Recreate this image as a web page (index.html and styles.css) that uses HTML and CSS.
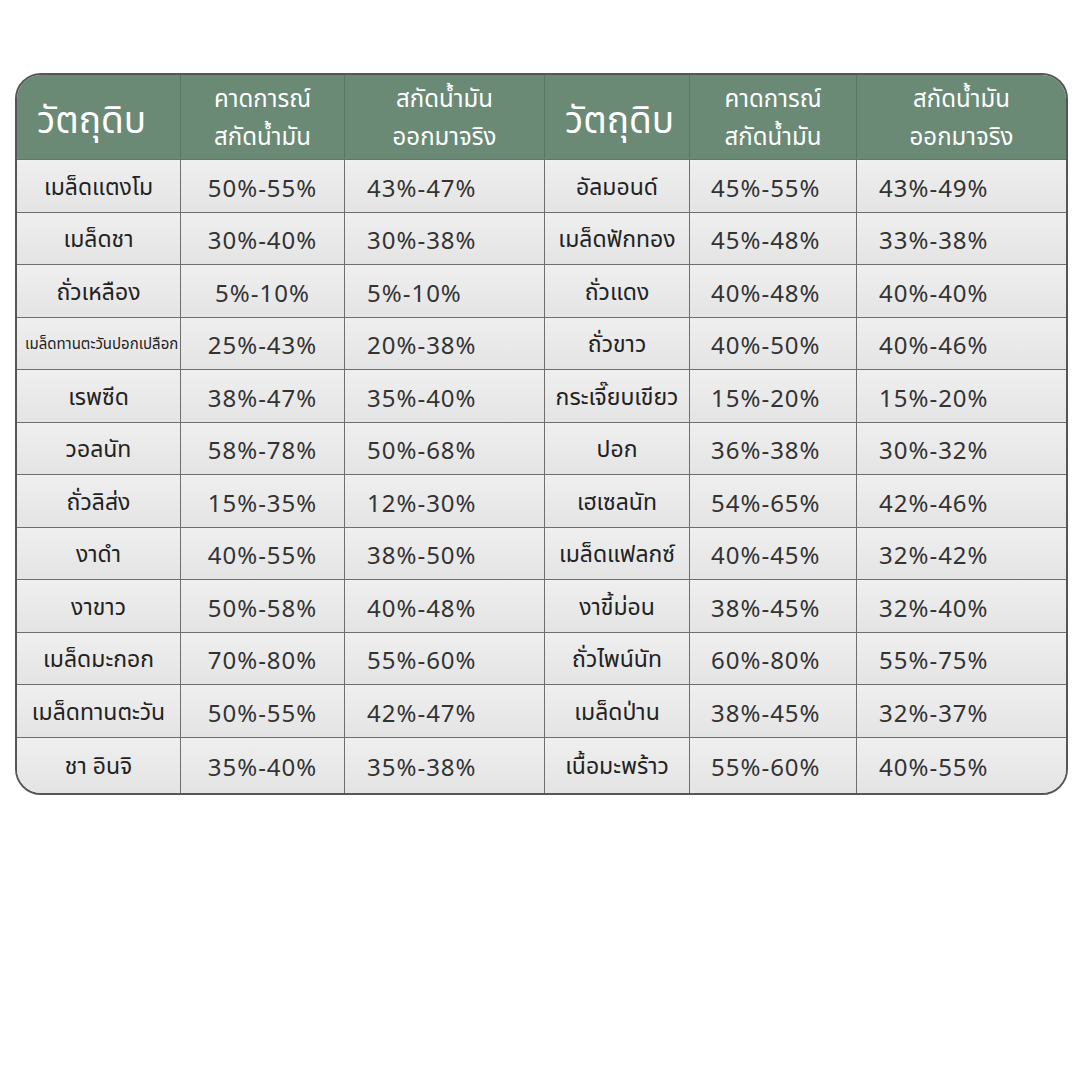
FILE: index.html
```html
<!DOCTYPE html>
<html lang="th">
<head>
<meta charset="utf-8">
<link rel="stylesheet" href="styles.css">
</head>
<body>
<div class="page">
  <div class="table">
    <div class="hd name-h">วัตถุดิบ</div>
    <div class="hd">คาดการณ์<br>สกัดน้ำมัน</div>
    <div class="hd">สกัดน้ำมัน<br>ออกมาจริง</div>
    <div class="hd name-h">วัตถุดิบ</div>
    <div class="hd">คาดการณ์<br>สกัดน้ำมัน</div>
    <div class="hd">สกัดน้ำมัน<br>ออกมาจริง</div>

    <div class="c n">เมล็ดแตงโม</div><div class="c p">50%-55%</div><div class="c q">43%-47%</div>
    <div class="c n">อัลมอนด์</div><div class="c p2">45%-55%</div><div class="c q">43%-49%</div>

    <div class="c n">เมล็ดชา</div><div class="c p">30%-40%</div><div class="c q">30%-38%</div>
    <div class="c n">เมล็ดฟักทอง</div><div class="c p2">45%-48%</div><div class="c q">33%-38%</div>

    <div class="c n">ถั่วเหลือง</div><div class="c p">5%-10%</div><div class="c q">5%-10%</div>
    <div class="c n">ถั่วแดง</div><div class="c p2">40%-48%</div><div class="c q">40%-40%</div>

    <div class="c n small">เมล็ดทานตะวันปอกเปลือก</div><div class="c p">25%-43%</div><div class="c q">20%-38%</div>
    <div class="c n">ถั่วขาว</div><div class="c p2">40%-50%</div><div class="c q">40%-46%</div>

    <div class="c n">เรพซีด</div><div class="c p">38%-47%</div><div class="c q">35%-40%</div>
    <div class="c n">กระเจี๊ยบเขียว</div><div class="c p2">15%-20%</div><div class="c q">15%-20%</div>

    <div class="c n">วอลนัท</div><div class="c p">58%-78%</div><div class="c q">50%-68%</div>
    <div class="c n">ปอก</div><div class="c p2">36%-38%</div><div class="c q">30%-32%</div>

    <div class="c n">ถั่วลิส่ง</div><div class="c p">15%-35%</div><div class="c q">12%-30%</div>
    <div class="c n">เฮเซลนัท</div><div class="c p2">54%-65%</div><div class="c q">42%-46%</div>

    <div class="c n">งาดำ</div><div class="c p">40%-55%</div><div class="c q">38%-50%</div>
    <div class="c n">เมล็ดแฟลกซ์</div><div class="c p2">40%-45%</div><div class="c q">32%-42%</div>

    <div class="c n">งาขาว</div><div class="c p">50%-58%</div><div class="c q">40%-48%</div>
    <div class="c n">งาขี้ม่อน</div><div class="c p2">38%-45%</div><div class="c q">32%-40%</div>

    <div class="c n">เมล็ดมะกอก</div><div class="c p">70%-80%</div><div class="c q">55%-60%</div>
    <div class="c n">ถั่วไพน์นัท</div><div class="c p2">60%-80%</div><div class="c q">55%-75%</div>

    <div class="c n">เมล็ดทานตะวัน</div><div class="c p">50%-55%</div><div class="c q">42%-47%</div>
    <div class="c n">เมล็ดป่าน</div><div class="c p2">38%-45%</div><div class="c q">32%-37%</div>

    <div class="c n">ชา อินจิ</div><div class="c p">35%-40%</div><div class="c q">35%-38%</div>
    <div class="c n">เนื้อมะพร้าว</div><div class="c p2">55%-60%</div><div class="c q">40%-55%</div>
  </div>
</div>
</body>
</html>
```

FILE: styles.css
```css
html, body {
  margin: 0;
  padding: 0;
  background: #ffffff;
}
body {
  font-family: "Noto Sans", "Noto Sans Thai", "Open Sans", sans-serif;
  color: #333333;
}
.page {
  width: 1080px;
  height: 1080px;
  padding: 73px 0 0 15px;
  box-sizing: border-box;
}
.table {
  width: 1053px;
  box-sizing: border-box;
  border: 2px solid #555;
  border-radius: 26px;
  overflow: hidden;
  display: grid;
  grid-template-columns: 164px 164px 200px 145px 167px 209px;
  grid-template-rows: 84px repeat(11, 52.5px) 56px;
  background: #e9e9e9;
}
.hd {
  background: #6a8a76;
  color: #ffffff;
  font-size: 24px;
  line-height: 38px;
  display: flex;
  align-items: center;
  justify-content: center;
  text-align: center;
  border-right: 1px solid #5a7866;
}
.hd:nth-child(6) { border-right: none; }
.name-h {
  font-size: 37px;
  line-height: 44px;
  justify-content: flex-start;
  padding-left: 20px;
  padding-top: 4px;
}
.c {
  display: flex;
  align-items: center;
  padding-top: 3px;
  border-top: 1px solid #6e6e6e;
  border-right: 1px solid #6e6e6e;
  font-size: 24px;
  letter-spacing: 1px;
  color: #333;
  background: linear-gradient(#efefef, #e4e4e4);
}
.c:nth-child(6n) { border-right: none; }
.n {
  justify-content: center;
  font-size: 23px;
  letter-spacing: 0;
  color: #222;
}
.small {
  font-size: 15px;
  white-space: nowrap;
  justify-content: flex-start;
  padding-left: 8px;
}
.p {
  justify-content: center;
}
.p2 {
  padding-left: 21px;
}
.q {
  padding-left: 22px;
}
```
